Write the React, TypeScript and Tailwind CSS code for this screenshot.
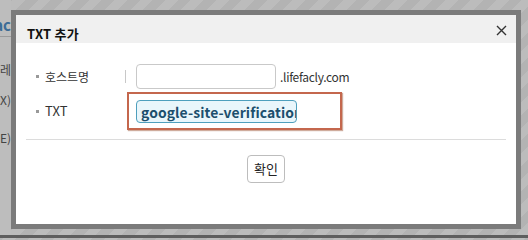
import React from "react";

export default function App() {
  const font = { fontFamily: '"Noto Sans CJK KR", "Noto Sans", sans-serif' };
  return (
    <div
      className="relative w-[528px] h-[240px] overflow-hidden bg-[repeating-linear-gradient(135deg,#b3b3b3_0px,#b3b3b3_9px,#bcbcbc_9px,#bcbcbc_18px)]"
      style={font}
    >
      {/* underlying page fragments */}
      <div className="flex flex-col w-[11px] h-[236px] overflow-hidden bg-[#bdbdbd]">
        <div className="h-[12px]" />
        <div className="flex justify-end h-[25px] border-b border-[#9a9a9a] text-[15px] font-bold text-[#3b6c96] leading-[25px] whitespace-nowrap">
          <span className="shrink-0">ac</span>
        </div>
        <div className="flex justify-end mt-[24px] text-[12px] text-[#444] whitespace-nowrap">
          <span className="shrink-0">레</span>
        </div>
        <div className="flex justify-end mt-[12px] text-[12px] text-[#444] whitespace-nowrap">
          <span className="shrink-0">X)</span>
        </div>
        <div className="flex justify-end mt-[20px] text-[12px] text-[#444] whitespace-nowrap">
          <span className="shrink-0">E)</span>
        </div>
      </div>
      <div className="absolute left-0 top-[235px] w-[528px] h-[3px] bg-[#5e5e5e]" />

      {/* dialog */}
      <div className="absolute left-[11px] top-[10px] w-[510px] h-[219px] border-[5px] border-[#7b7b7b] bg-white flex flex-col">
        <div className="h-[28px] bg-[#f0f0f0] flex items-start justify-between pl-[11px] pr-[9px]">
          <span className="text-[13px] font-bold text-[#111] leading-none pt-[12px] tracking-[0.2px]">
            TXT 추가
          </span>
          <svg width="11" height="11" viewBox="0 0 11 11" className="mt-[10px]">
            <path d="M1 1 L10 10 M10 1 L1 10" stroke="#333" strokeWidth="1.4" />
          </svg>
        </div>

        <div className="flex flex-col pl-[20px] pt-[21px]">
          {/* row 1 */}
          <div className="flex items-center h-[25px]">
            <div className="w-[89px] flex items-center text-[12px] text-[#333]">
              <span className="w-[3px] h-[3px] bg-[#999] mr-[6px]" />
              <span>호스트명</span>
            </div>
            <div className="w-px h-[13px] bg-[#c8c8c8]" />
            <input
              type="text"
              className="ml-[10px] w-[140px] h-[25px] border border-[#c9c9c9] rounded-[4px] bg-white outline-none"
            />
            <span className="ml-[4px] text-[12px] text-[#333] tracking-[-0.3px]">.lifefacly.com</span>
          </div>

          {/* row 2 */}
          <div className="flex items-center mt-[3px]">
            <div className="w-[91px] flex items-center text-[13px] text-[#333]">
              <span className="w-[3px] h-[3px] bg-[#999] mr-[6px]" />
              <span>TXT</span>
            </div>
            <div className="w-[215px] h-[38px] border-2 border-[#c4674d] shadow-[1px_1px_1px_rgba(160,90,60,0.5)] flex items-start pl-[7px] pt-[6px]">
              <input
                type="text"
                readOnly
                value="google-site-verification=ZxQ3"
                style={font}
                className="w-[161px] h-[23px] border border-[#4e9fbd] rounded-[4px] bg-[#e9f6fb] pl-[4px] pr-0 text-[13.9px] font-bold text-[#1c4f6d] tracking-[0.1px] outline-none"
              />
            </div>
          </div>
        </div>

        <div className="mx-[10px] mt-[9px] h-px bg-[#dcdcdc]" />

        <div className="flex justify-center mt-[15px]">
          <button className="w-[38px] h-[28px] border border-[#bdbdbd] rounded-[4px] bg-white text-[13px] text-[#222] flex items-center justify-center">
            확인
          </button>
        </div>
      </div>
    </div>
  );
}
